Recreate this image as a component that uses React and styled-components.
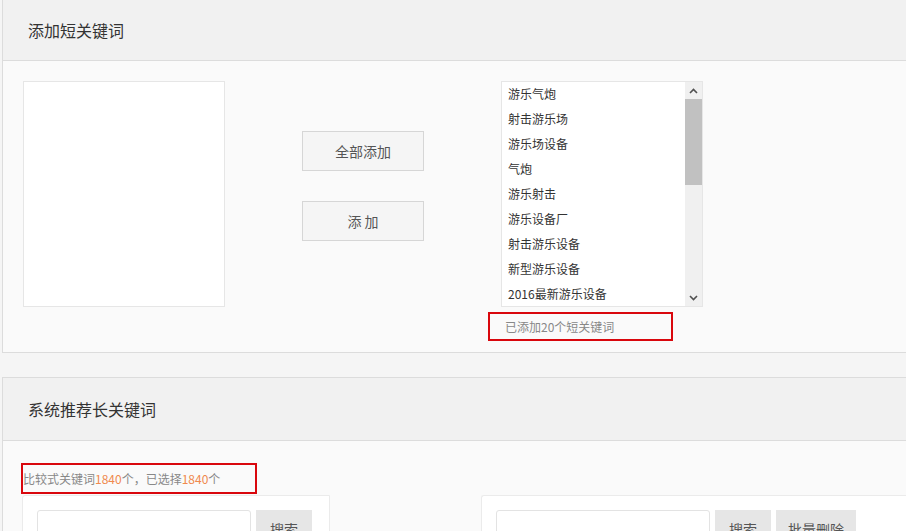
import React from 'react'
import styled, { createGlobalStyle } from 'styled-components'

// only the rows that fit in the box are drawn
const shortWords = [
  '游乐气炮', '射击游乐场', '游乐场设备', '气炮', '游乐射击', '游乐设备厂',
  '射击游乐设备', '新型游乐设备', '2016最新游乐设备',
]

const GlobalStyle = createGlobalStyle`
  html, body {
    margin: 0;
    padding: 0;
    background: #f5f5f5;
    overflow: hidden;
  }
  body {
    font-family: "Microsoft YaHei", "Noto Sans CJK SC", "Liberation Sans", sans-serif;
    color: #333;
  }
`

const Page = styled.div`
  padding-left: 2px;
  margin-right: -20px;
`

const Panel = styled.section`
  border: 1px solid #dcdcdc;
  background: #fafafa;
  margin-top: ${p => p.top || 0}px;
`

const Header = styled.div`
  height: ${p => p.h || 61}px;
  background: #f1f1f1;
  border-bottom: 1px solid #dcdcdc;
  display: flex;
  align-items: center;
  padding-left: 25px;
  font-size: 16px;
  color: #333;
`

const Body = styled.div`
  padding: ${p => p.pad};
`

const AddRow = styled.div`
  display: flex;
  align-items: flex-start;
  gap: 77px;
`

const SourceBox = styled.div`
  width: 200px;
  height: 224px;
  background: #fff;
  border: 1px solid #e6e6e6;
`

const ButtonCol = styled.div`
  display: flex;
  flex-direction: column;
  gap: 30px;
  padding-top: 50px;
`

const GreyButton = styled.button`
  width: 122px;
  height: 40px;
  background: #f5f5f5;
  border: 1px solid #d6d6d6;
  color: #555;
  font-family: inherit;
  font-size: 14px;
  padding: 0;
  cursor: pointer;
`

const ListCol = styled.div`
  display: flex;
  flex-direction: column;
`

const ListBox = styled.div`
  width: 200px;
  height: 224px;
  background: #fff;
  border: 1px solid #e6e6e6;
  display: flex;
`

const Items = styled.ul`
  flex: 1;
  margin: 0;
  padding: 0 0 0 6px;
  list-style: none;
  overflow: hidden;
`

const Item = styled.li`
  font-size: 12px;
  line-height: 24px;
  height: 25px;
  color: #333;
  white-space: nowrap;
`

const ScrollBar = styled.div`
  width: 17px;
  background: #f0f0f0;
  display: flex;
  flex-direction: column;
`

const Arrow = styled.div`
  height: 17px;
  display: flex;
  align-items: center;
  justify-content: center;
`

const Track = styled.div`
  flex: 1;
`

const Thumb = styled.div`
  height: 86px;
  background: #c1c1c1;
`

const Marked = styled.div`
  border: 2px solid #d9070d;
  box-sizing: border-box;
  display: flex;
  align-items: center;
  font-size: 12px;
  color: #888;
  width: ${p => p.w}px;
  height: ${p => p.h}px;
  margin-left: ${p => p.ml || 0}px;
  margin-top: ${p => p.mt || 0}px;
  padding-left: ${p => p.pl || 0}px;
`

const Num = styled.span`
  color: #f0894d;
`

const SearchRow = styled.div`
  display: flex;
  gap: 151px;
  margin-top: 1px;
  margin-left: 1px;
`

const SearchCard = styled.div`
  width: ${p => p.w ? `${p.w}px` : 'auto'};
  flex: ${p => p.w ? 'none' : 1};
  height: 60px;
  background: #fff;
  border: 1px solid #ebebeb;
  border-right: ${p => p.w ? '1px solid #ebebeb' : 'none'};
  border-radius: 3px 0 0 0;
  padding: 14px 0 0 14px;
  display: flex;
  gap: 4px;
  align-items: flex-start;
`

const SearchInput = styled.input`
  width: 214px;
  height: 40px;
  box-sizing: border-box;
  border: 1px solid #e3e3e3;
  border-radius: 3px;
  background: #fff;
  outline: none;
  margin: 0 1px 0 0;
  padding: 0;
`

const FlatButton = styled.button`
  width: ${p => p.w}px;
  height: 40px;
  border: none;
  background: #e6e6e6;
  color: #555;
  font-family: inherit;
  font-size: 14px;
  padding: 9px 0 0;
  display: flex;
  justify-content: center;
  align-items: flex-start;
  margin-left: ${p => p.ml || 0}px;
`

function Chevron({ up }) {
  return (
    <svg width="9" height="6" viewBox="0 0 9 6">
      <path
        d={up ? 'M1 5 L4.5 1.5 L8 5' : 'M1 1 L4.5 4.5 L8 1'}
        fill="none"
        stroke="#505050"
        strokeWidth="1.6"
      />
    </svg>
  )
}

export default function App() {
  return (
    <Page>
      <GlobalStyle />
      <Panel top={-2}>
        <Header h={61}>添加短关键词</Header>
        <Body pad="20px 0 11px 20px">
          <AddRow>
            <SourceBox />
            <ButtonCol>
              <GreyButton>全部添加</GreyButton>
              <GreyButton>添 加</GreyButton>
            </ButtonCol>
            <ListCol>
              <ListBox>
                <Items>
                  {shortWords.map(w => <Item key={w}>{w}</Item>)}
                </Items>
                <ScrollBar>
                  <Arrow><Chevron up /></Arrow>
                  <Thumb />
                  <Track />
                  <Arrow><Chevron /></Arrow>
                </ScrollBar>
              </ListBox>
              <Marked w={185} h={29} ml={-13} mt={5} pl={15}>已添加20个短关键词</Marked>
            </ListCol>
          </AddRow>
        </Body>
      </Panel>
      <Panel top={24}>
        <Header h={62}>系统推荐长关键词</Header>
        <Body pad="22px 0 0 18px">
          <Marked w={236} h={31} pl={0}>
            比较式关键词<Num>1840</Num>个，已选择<Num>1840</Num>个
          </Marked>
          <SearchRow>
            <SearchCard w={292}>
              <SearchInput />
              <FlatButton w={56}>搜索</FlatButton>
            </SearchCard>
            <SearchCard>
              <SearchInput />
              <FlatButton w={56}>搜索</FlatButton>
              <FlatButton w={80} ml={1}>批量删除</FlatButton>
            </SearchCard>
          </SearchRow>
        </Body>
      </Panel>
    </Page>
  )
}
